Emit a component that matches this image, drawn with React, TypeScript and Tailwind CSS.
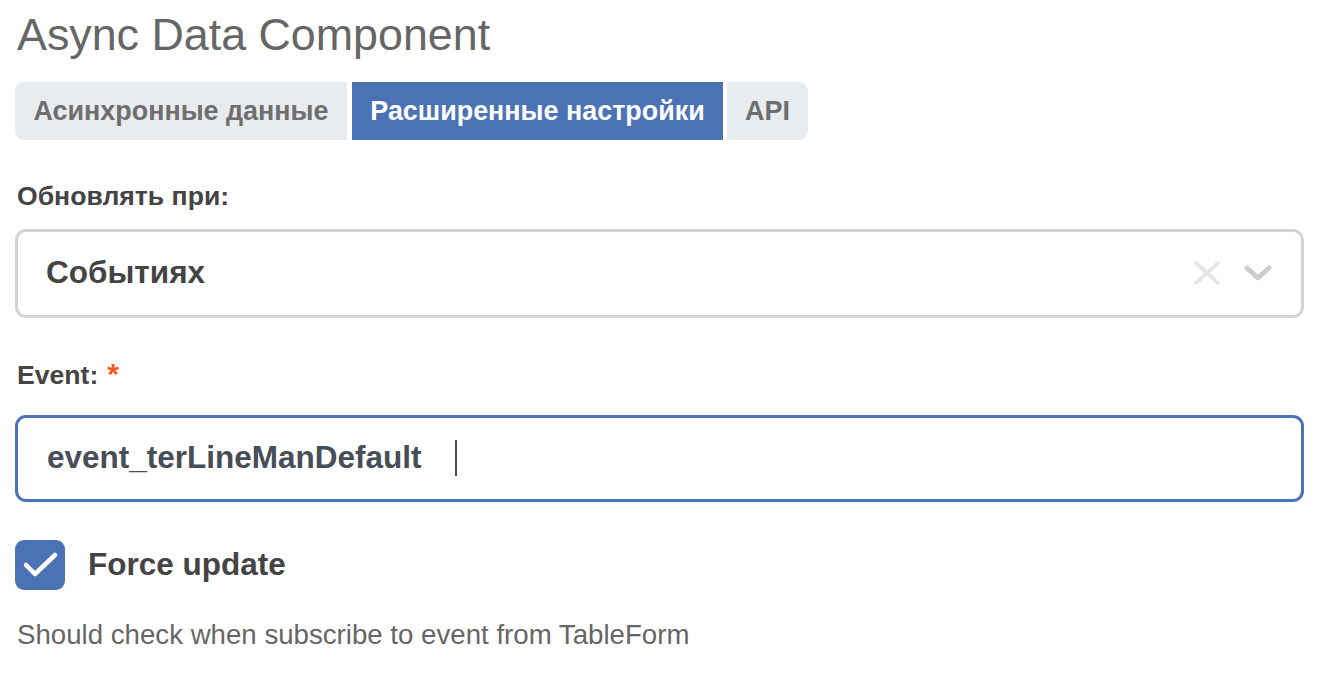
import React from "react";

export default function App() {
  return (
    <div
      className="bg-white min-h-[675px] px-[15px] pt-[12px]"
      style={{ fontFamily: '"Liberation Sans", Arial, sans-serif' }}
    >
      <h1 className="text-[44.8px] leading-[45px] text-[#666666] pl-[2px] font-normal">
        Async Data Component
      </h1>

      <div className="mt-[25px] flex h-[58px]">
        <div className="flex items-center justify-center h-full w-[332px] bg-[#e8ecee] rounded-l-[9px] text-[26.9px] leading-none font-bold text-[#6e6e6e] mr-[5px]">
          Асинхронные данные
        </div>
        <div className="flex items-center justify-center h-full w-[371px] bg-[#4a72b5] text-[26.9px] leading-none font-bold text-white mr-[4px]">
          Расширенные настройки
        </div>
        <div className="flex items-center justify-center h-full w-[81px] bg-[#e8ecee] rounded-r-[9px] text-[26.9px] leading-none font-bold text-[#6e6e6e]">
          API
        </div>
      </div>

      <div className="mt-[43px] pl-[2px] text-[26.6px] leading-none font-bold text-[#444444]">
        Обновлять при:
      </div>

      <div className="mt-[19px] w-[1289px] h-[89px] border-[3px] border-[#d4d4d4] rounded-[11px] flex items-center pl-[28px] pr-[29px]">
        <span className="flex-1 text-[31.5px] leading-none font-bold text-[#444444]">
          Событиях
        </span>
        <svg width="28" height="26" viewBox="0 0 28 26" className="mr-[23px]">
          <path
            d="M3 3 L25 23 M25 3 L3 23"
            stroke="#e6e6e6"
            strokeWidth="4"
            strokeLinecap="round"
            fill="none"
          />
        </svg>
        <svg width="28" height="17" viewBox="0 0 28 17">
          <path
            d="M3 3 L14 13 L25 3"
            stroke="#cdcdcd"
            strokeWidth="5"
            strokeLinecap="round"
            strokeLinejoin="round"
            fill="none"
          />
        </svg>
      </div>

      <div className="mt-[41px] pl-[2px] flex items-baseline text-[26.6px] leading-none font-bold text-[#444444]">
        <span>Event:</span>
        <span className="ml-[9px] text-[30px] text-[#ff5722]">*</span>
      </div>

      <div className="mt-[26px] w-[1289px] h-[87px] border-[3px] border-[#4a72b5] rounded-[11px] flex items-center pl-[29px]">
        <span className="text-[31.5px] leading-none font-bold text-[#474e57]">
          event_terLineManDefault
        </span>
        <span className="ml-[33px] w-[2px] h-[36px] bg-[#474e57]" />
      </div>

      <div className="mt-[38px] flex items-center h-[50px]">
        <div className="w-[50px] h-[50px] rounded-[9px] bg-[#4a72b5] flex items-center justify-center">
          <svg width="50" height="50" viewBox="0 0 50 50">
            <path
              d="M11 25 L20 34 L40 15"
              stroke="#ffffff"
              strokeWidth="4.5"
              strokeLinecap="round"
              strokeLinejoin="round"
              fill="none"
            />
          </svg>
        </div>
        <span className="ml-[23px] text-[31.5px] leading-none font-bold text-[#444444]">
          Force update
        </span>
      </div>

      <div className="mt-[31px] pl-[2px] text-[27.65px] leading-none text-[#666666]">
        Should check when subscribe to event from TableForm
      </div>
    </div>
  );
}
